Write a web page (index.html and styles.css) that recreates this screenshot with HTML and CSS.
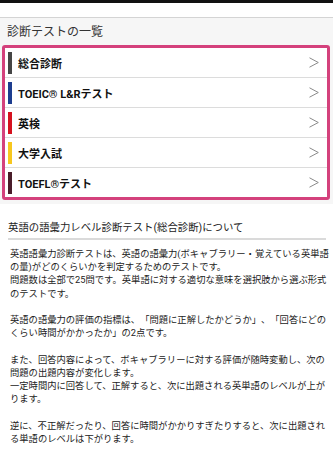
FILE: index.html
```html
<!DOCTYPE html>
<html lang="ja">
<head>
<meta charset="utf-8">
<title>診断テストの一覧</title>
<link rel="stylesheet" href="styles.css">
</head>
<body>
<div class="topbar"></div>
<div class="spacer"></div>
<section class="listsec">
  <h1 class="title">診断テストの一覧</h1>
  <div class="box">
    <div class="row"><span class="bar c1"></span><span class="label">総合診断</span><svg class="chev" width="10" height="11" viewBox="0 0 10 11"><polyline points="0.5,0.8 9.3,5.5 0.5,10.2" fill="none" stroke="#8a8a8a" stroke-width="1"/></svg></div>
    <div class="row"><span class="bar c2"></span><span class="label">TOEIC® L&amp;Rテスト</span><svg class="chev" width="10" height="11" viewBox="0 0 10 11"><polyline points="0.5,0.8 9.3,5.5 0.5,10.2" fill="none" stroke="#8a8a8a" stroke-width="1"/></svg></div>
    <div class="row"><span class="bar c3"></span><span class="label">英検</span><svg class="chev" width="10" height="11" viewBox="0 0 10 11"><polyline points="0.5,0.8 9.3,5.5 0.5,10.2" fill="none" stroke="#8a8a8a" stroke-width="1"/></svg></div>
    <div class="row"><span class="bar c4"></span><span class="label">大学入試</span><svg class="chev" width="10" height="11" viewBox="0 0 10 11"><polyline points="0.5,0.8 9.3,5.5 0.5,10.2" fill="none" stroke="#8a8a8a" stroke-width="1"/></svg></div>
    <div class="row"><span class="bar c5"></span><span class="label">TOEFL®テスト</span><svg class="chev" width="10" height="11" viewBox="0 0 10 11"><polyline points="0.5,0.8 9.3,5.5 0.5,10.2" fill="none" stroke="#8a8a8a" stroke-width="1"/></svg></div>
  </div>
</section>
<section class="about">
  <h2 class="about-title">英語の語彙力レベル診断テスト(総合診断)について</h2>
  <div class="text">
    <p>英語語彙力診断テストは、英語の語彙力(ボキャブラリー・覚えている英単語の量)がどのくらいかを判定するためのテストです。<br>問題数は全部で25問です。英単語に対する適切な意味を選択肢から選ぶ形式のテストです。</p>
    <p>英語の語彙力の評価の指標は、「問題に正解したかどうか」、「回答にどのくらい時間がかかったか」の2点です。</p>
    <p>また、回答内容によって、ボキャブラリーに対する評価が随時変動し、次の問題の出題内容が変化します。<br>一定時間内に回答して、正解すると、次に出題される英単語のレベルが上がります。</p>
    <p>逆に、不正解だったり、回答に時間がかかりすぎたりすると、次に出題される単語のレベルは下がります。</p>
  </div>
</section>
</body>
</html>
```
FILE: styles.css
```css
html, body {
  margin: 0;
  padding: 0;
  background: #ffffff;
  font-family: "Roboto", "Noto Sans CJK JP", sans-serif;
  color: #222;
  overflow: hidden;
  text-spacing-trim: space-all;
}
.topbar {
  height: 3px;
  background: #111;
}
.spacer {
  height: 14px;
  background: #fff;
  border-bottom: 1px solid #d4d4d4;
}
.listsec {
  background: #f6f6f6;
  padding: 0 3px 4px 2px;
}
.title {
  margin: 0;
  height: 27px;
  line-height: 28px;
  padding-left: 5px;
  font-size: 12px;
  font-weight: normal;
  color: #333;
}
.box {
  border: 3px solid #d4417c;
  border-radius: 3px;
  background: #fff;
}
.row {
  display: flex;
  align-items: center;
  height: 29px;
  border-bottom: 1px solid #dcdcdc;
}
.row:last-child {
  border-bottom: none;
}
.bar {
  width: 4px;
  height: 22px;
  margin-left: 3px;
  margin-right: 6px;
}
.c1 { background: #454545; }
.c2 { background: #1d3d8f; }
.c3 { background: #d5121f; }
.c4 { background: #f7c71e; }
.c5 { background: #4a1d2a; }
.label {
  font-size: 11px;
  font-weight: bold;
  color: #111;
}
.chev {
  margin-left: auto;
  margin-right: 8px;
}
.about {
  padding: 16px 7px 0 8px;
}
.about-title {
  margin: 0;
  font-size: 10.4px;
  font-weight: normal;
  color: #222;
  line-height: 15px;
  padding-bottom: 3px;
  border-bottom: 2px solid #dadada;
}
.text {
  margin-top: 7px;
  padding-left: 2px;
  width: 34.6em;
  font-size: 9.3px;
  line-height: 13.2px;
  color: #222;
}
.text p {
  margin: 0 0 13.2px;
}
```
